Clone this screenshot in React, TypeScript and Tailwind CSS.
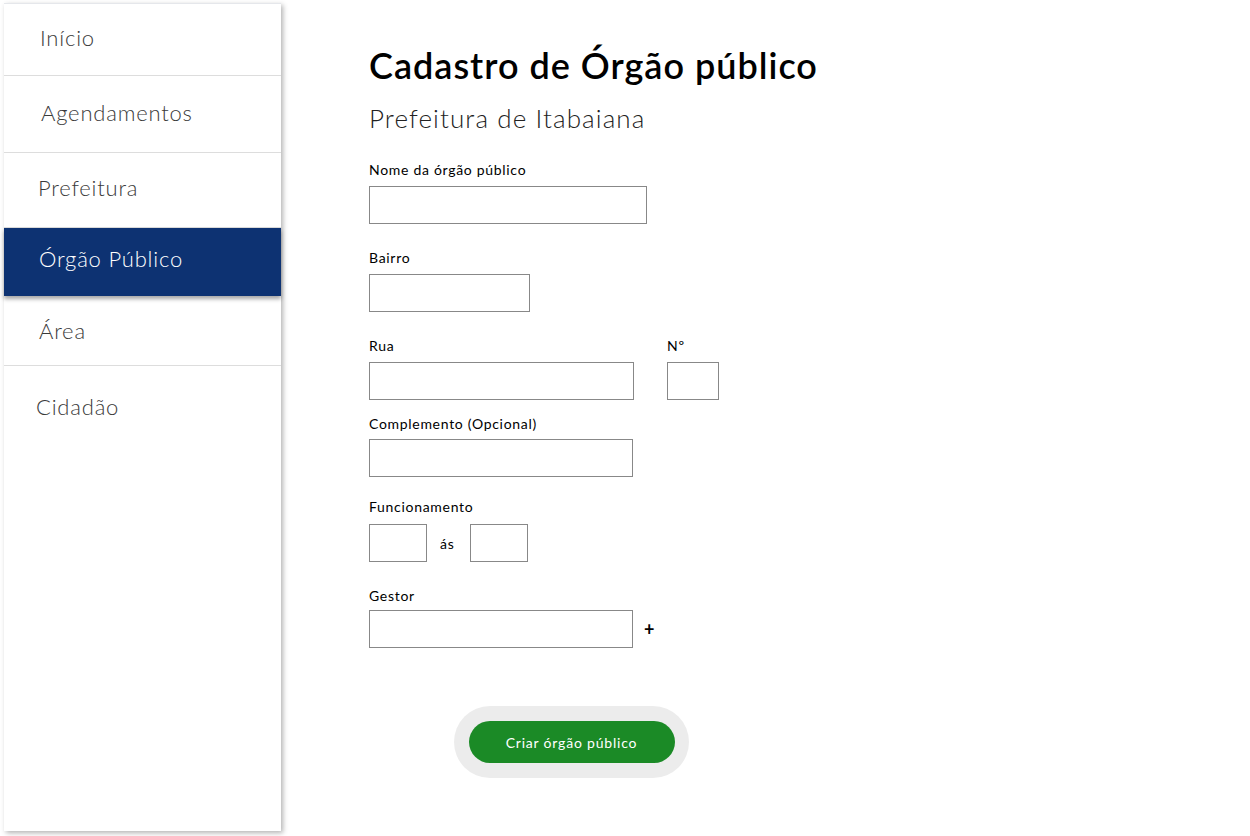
const menu = [
  { label: "Início", h: "h-[72px]", pl: "pl-9", pb: "pb-[4px]" },
  { label: "Agendamentos", h: "h-[77px]", pl: "pl-[37px]", pb: "pb-[4px]" },
  { label: "Prefeitura", h: "h-[75px]", pl: "pl-[34px]", pb: "pb-[6px]" },
  { label: "Órgão Público", h: "h-[68px]", pl: "pl-[35px]", pb: "pb-[7px]", active: true },
  { label: "Área", h: "h-[70px]", pl: "pl-[35px]", pb: "pb-[1px]" },
  { label: "Cidadão", h: "h-[84px]", pl: "pl-8", pb: "pb-[4px]", last: true },
];

function Sidebar() {
  return (
    <aside className="w-[277px] h-[828px] mt-[3px] ml-1 bg-white shadow-[2px_2px_5px_rgba(0,0,0,0.3)] border-t border-gray-200 shrink-0">
      {menu.map((m) => (
        <div
          key={m.label}
          className={`${m.h} ${m.pl} ${m.pb} flex items-center text-[22px] font-light tracking-[0.8px] ${
            m.active
              ? "bg-[#0d3272] text-white shadow-[0_3px_4px_rgba(0,0,0,0.35)] relative"
              : m.last
              ? "text-[#3a3a3a]"
              : "text-[#3a3a3a] border-b border-[#ddd]"
          }`}
        >
          {m.label}
        </div>
      ))}
    </aside>
  );
}

function Field({ label, className = "" }: { label: string; className?: string }) {
  return (
    <div className={className}>
      <label className="block text-[14px] text-black leading-none tracking-[0.7px]">{label}</label>
    </div>
  );
}

export default function App() {
  const box = "h-[38px] border border-[#888] bg-white";
  return (
    <div className="w-[1250px] h-[836px] flex bg-white font-['Lato',sans-serif] overflow-hidden">
      <Sidebar />
      <main className="pl-[88px] pt-[47px] flex flex-col">
        <h1 className="text-[36px] font-semibold text-black leading-none tracking-[1px]">
          Cadastro de Órgão público
        </h1>
        <p className="mt-[22px] text-[26px] font-light text-[#222] leading-none tracking-[1.1px]">
          Prefeitura de Itabaiana
        </p>

        <Field label="Nome da órgão público" className="mt-[32px]" />
        <div className={`${box} w-[278px] mt-[9px]`} />

        <Field label="Bairro" className="mt-[27px]" />
        <div className={`${box} w-[161px] mt-[9px]`} />

        <div className="flex mt-[27px] gap-[33px]">
          <div>
            <Field label="Rua" />
            <div className={`${box} w-[265px] mt-[9px]`} />
          </div>
          <div>
            <Field label="Nº" />
            <div className={`${box} w-[52px] mt-[9px]`} />
          </div>
        </div>

        <Field label="Complemento (Opcional)" className="mt-[17px]" />
        <div className={`${box} w-[264px] mt-[8px]`} />

        <Field label="Funcionamento" className="mt-[23px]" />
        <div className="flex items-center mt-[10px]">
          <div className={`${box} w-[58px]`} />
          <span className="ml-[13px] mr-[16px] text-[14px] text-black tracking-[0.7px]">ás</span>
          <div className={`${box} w-[58px]`} />
        </div>

        <Field label="Gestor" className="mt-[27px]" />
        <div className="flex items-center mt-[7px]">
          <div className={`${box} w-[264px]`} />
          <span className="ml-[11px] text-[18px] font-bold text-black leading-none">+</span>
        </div>

        <div className="mt-[58px] ml-[85px] w-[235px] h-[72px] rounded-full bg-[#ececec] flex items-center justify-center">
          <button className="w-[206px] h-[42px] rounded-full bg-[#1b8a26] text-white text-[14px] tracking-[0.8px]">
            Criar órgão público
          </button>
        </div>
      </main>
    </div>
  );
}
